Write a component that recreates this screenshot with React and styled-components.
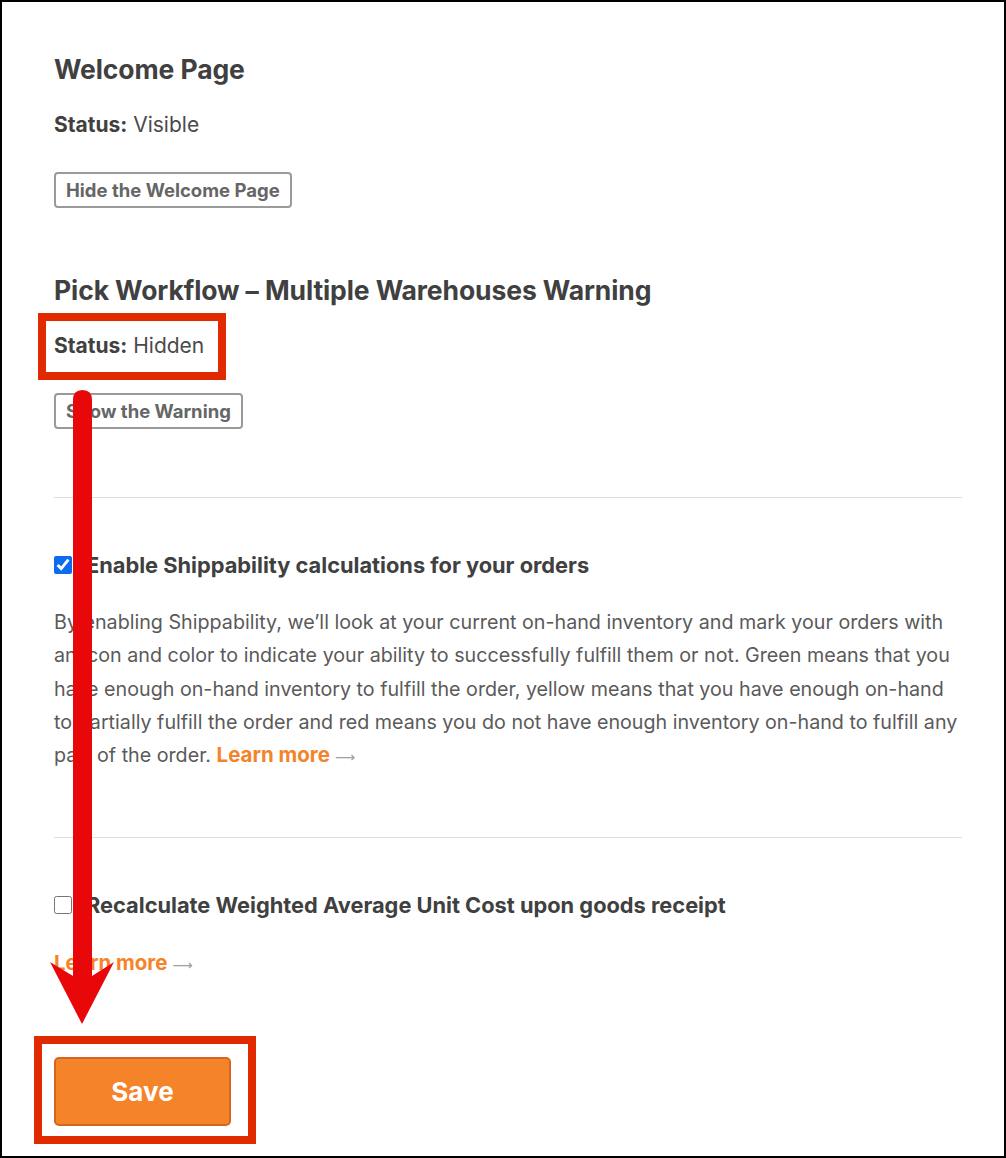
import styled, { createGlobalStyle } from "styled-components";

const GlobalStyle = createGlobalStyle`
  html, body {
    margin: 0;
    padding: 0;
    background: #fff;
  }
  body {
    font-family: Inter, "Noto Sans", "Liberation Sans", sans-serif;
    color: #444;
  }
`

const Frame = styled.div`
  position: relative;
  box-sizing: border-box;
  width: 1006px;
  height: 1158px;
  border: 2px solid #000;
  padding: 51px 42px 0 52px;
  overflow: hidden;
`

const Heading = styled.h2`
  margin: 0;
  font-size: 26.5px;
  line-height: 32px;
  font-weight: 700;
  color: #404040;
  letter-spacing: -0.1px;
`

const StatusLine = styled.p`
  margin: 26px 0 0;
  font-size: 21px;
  line-height: 28px;
  color: #4a4a4a;

  b {
    font-weight: 700;
    color: #404040;
  }
`

const OutlineButton = styled.button`
  display: block;
  margin-top: 33px;
  height: 36px;
  padding: 0 10px;
  border: 2px solid #9a9a9a;
  border-radius: 4px;
  background: #fff;
  font-family: inherit;
  font-size: 18.5px;
  font-weight: 700;
  color: #666;
`

const Section = styled.section`
  margin-top: ${p => p.$gap || 0}px;
`

const Divider = styled.hr`
  margin: ${p => p.$top}px 0 0;
  border: 0;
  border-top: 1px solid #dedede;
`

const CheckRow = styled.label`
  display: flex;
  align-items: center;
  gap: 14px;
  margin-top: 53px;
  font-size: 21.8px;
  line-height: 28px;
  font-weight: 700;
  color: #404040;
`

const Checkbox = styled.input`
  margin: 0;
  width: 18px;
  height: 18px;
  accent-color: #0b6cf0;
`

const Description = styled.p`
  margin: 27px 0 0;
  font-size: 19.7px;
  line-height: 33.3px;
  color: #5a5a5a;
`

const LearnMore = styled.a`
  display: ${p => (p.$block ? "block" : "inline")};
  margin-top: ${p => p.$top || 0}px;
  font-size: 20.5px;
  line-height: 28px;
  font-weight: 700;
  color: #f5832a;
  text-decoration: none;
`

const Arrow = styled.span`
  margin-left: 5px;
  font-family: "DejaVu Sans", sans-serif;
  font-size: 14px;
  font-weight: 400;
  color: #a0a0a0;
`

const SaveButton = styled.button`
  display: block;
  margin-top: 78px;
  width: 177px;
  height: 69px;
  border: 2px solid #d4671d;
  border-radius: 5px;
  background: #f5832a;
  font-family: inherit;
  font-size: 26px;
  font-weight: 700;
  color: #fff;
`

const Highlight = styled.div`
  position: absolute;
  left: ${p => p.$x}px;
  top: ${p => p.$y}px;
  width: ${p => p.$w}px;
  height: ${p => p.$h}px;
  box-sizing: border-box;
  border: 8px solid #e22a00;
  pointer-events: none;
`

const ArrowOverlay = styled.svg`
  position: absolute;
  left: 46px;
  top: 384px;
  pointer-events: none;
`

const DownArrow = () => (
  <ArrowOverlay width="68" height="642" viewBox="0 0 68 642">
    <path
      d="M25 14 Q25 4 34.5 4 Q44 4 44 14 L44 590 L66 576 L34 638 L2 576 L25 590 Z"
      fill="#e8080a"
    />
  </ArrowOverlay>
)

export default function App() {
  return (
    <>
      <GlobalStyle />
      <Frame>
        <Section>
          <Heading>Welcome Page</Heading>
          <StatusLine><b>Status:</b> Visible</StatusLine>
          <OutlineButton>Hide the Welcome Page</OutlineButton>
        </Section>

        <Section $gap={66}>
          <Heading>Pick Workflow – Multiple Warehouses Warning</Heading>
          <StatusLine><b>Status:</b> Hidden</StatusLine>
          <OutlineButton>Show the Warning</OutlineButton>
        </Section>

        <Divider $top={68} />

        <CheckRow>
          <Checkbox type="checkbox" defaultChecked />
          Enable Shippability calculations for your orders
        </CheckRow>
        <Description>
          By enabling Shippability, we’ll look at your current on-hand inventory and mark your orders with
          an icon and color to indicate your ability to successfully fulfill them or not. Green means that you
          have enough on-hand inventory to fulfill the order, yellow means that you have enough on-hand
          to partially fulfill the order and red means you do not have enough inventory on-hand to fulfill any
          part of the order. <LearnMore href="#">Learn more<Arrow>⟶</Arrow></LearnMore>
        </Description>

        <Divider $top={65} />

        <CheckRow>
          <Checkbox type="checkbox" />
          Recalculate Weighted Average Unit Cost upon goods receipt
        </CheckRow>
        <LearnMore href="#" $block $top={30}>Learn more<Arrow>⟶</Arrow></LearnMore>

        <SaveButton>Save</SaveButton>

        <Highlight $x={36} $y={311} $w={188} $h={67} />
        <Highlight $x={32} $y={1034} $w={222} $h={108} />
        <DownArrow />
      </Frame>
    </>
  )
}
